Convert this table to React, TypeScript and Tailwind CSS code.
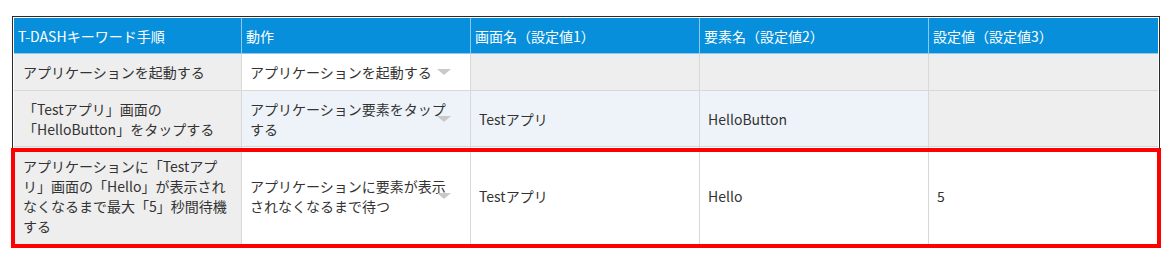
import React from 'react';

type Cell = { lines: string[]; bg: string; select?: boolean };

const HEADERS = ['T-DASHキーワード手順', '動作', '画面名（設定値1）', '要素名（設定値2）', '設定値（設定値3）'];

const GRAY = 'bg-[#eeeeee]';
const BLUE = 'bg-[#eef3fa]';
const WHITE = 'bg-white';

const ROWS: { height: string; cells: Cell[]; highlight?: boolean }[] = [
  {
    height: 'h-[37px]',
    cells: [
      { lines: ['アプリケーションを起動する'], bg: GRAY },
      { lines: ['アプリケーションを起動する'], bg: WHITE, select: true },
      { lines: [], bg: GRAY },
      { lines: [], bg: GRAY },
      { lines: [], bg: GRAY },
    ],
  },
  {
    height: 'h-[56px]',
    cells: [
      { lines: ['「Testアプリ」画面の', '「HelloButton」をタップする'], bg: GRAY },
      { lines: ['アプリケーション要素をタップ', 'する'], bg: BLUE, select: true },
      { lines: ['Testアプリ'], bg: BLUE },
      { lines: ['HelloButton'], bg: BLUE },
      { lines: [], bg: GRAY },
    ],
  },
  {
    height: 'h-[99px]',
    highlight: true,
    cells: [
      {
        lines: ['アプリケーションに「Testアプ', 'リ」画面の「Hello」が表示され', 'なくなるまで最大「5」秒間待機', 'する'],
        bg: GRAY,
      },
      { lines: ['アプリケーションに要素が表示', 'されなくなるまで待つ'], bg: WHITE, select: true },
      { lines: ['Testアプリ'], bg: WHITE },
      { lines: ['Hello'], bg: WHITE },
      { lines: ['5'], bg: WHITE },
    ],
  },
];

const cols = 'grid grid-cols-[228px_229px_229px_229px_229px]';

export default function App() {
  return (
    <div
      className="w-[1176px] h-[275px] bg-white pt-[16px] pl-[12px] text-[14px] leading-[20px] text-[#333333]"
      style={{ fontFamily: '"Noto Sans CJK JP", "Noto Sans", sans-serif' }}
    >
      <div className="w-[1148px] border border-[#2a2a2a] p-px bg-white">
        <div className={`${cols} h-[36px] bg-[#078fdb] text-white`}>
          {HEADERS.map((h, i) => (
            <div
              key={h}
              className={`flex items-center px-[4px] border-b border-[#8cc9ee] ${i < 4 ? 'border-r' : ''}`}
            >
              {h}
            </div>
          ))}
        </div>

        {ROWS.map((row, r) => (
          <div key={r} className="relative">
            <div className={`${cols} ${row.height}`}>
              {row.cells.map((c, i) => (
                <div
                  key={i}
                  className={`relative flex items-center ${i === 0 ? 'pl-[9px]' : 'pl-[8px]'} pr-[6px] border-b border-[#d8d8d8] ${
                    i < 4 ? 'border-r' : ''
                  } ${c.bg}`}
                >
                  <div>
                    {c.lines.map((l, k) => (
                      <div key={k} className="whitespace-nowrap">
                        {l}
                      </div>
                    ))}
                  </div>
                  {c.select && (
                    <span className="absolute right-[19px] top-1/2 -translate-y-1/2 w-0 h-0 border-l-[7px] border-r-[7px] border-t-[6px] border-l-transparent border-r-transparent border-t-[#c9c9c9]" />
                  )}
                </div>
              ))}
            </div>
            {row.highlight && (
              <div className="absolute top-[1px] -bottom-[2px] -left-[3px] -right-[3px] border-[4px] border-[#ff0000] pointer-events-none" />
            )}
          </div>
        ))}
      </div>
    </div>
  );
}
